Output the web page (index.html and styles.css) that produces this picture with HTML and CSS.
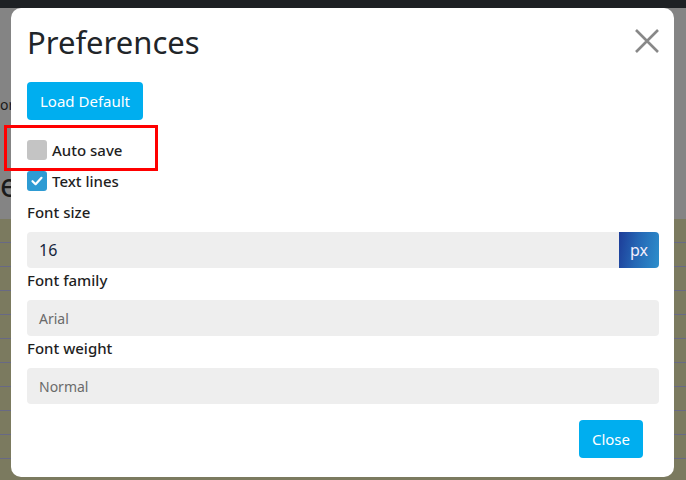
FILE: index.html
```html
<!DOCTYPE html>
<html lang="en">
<head>
<meta charset="utf-8">
<title>Preferences</title>
<link rel="stylesheet" href="styles.css">
</head>
<body>
<div class="page">
  <div class="topbar"></div>
  <div class="upper">
    <div class="bg-or">or</div>
    <div class="bg-e">e</div>
  </div>
  <div class="notepad"></div>
</div>

<div class="modal">
  <div class="modal-header">
    <h1 class="title">Preferences</h1>
    <button class="close-x" aria-label="Close">
      <svg width="24" height="24" viewBox="0 0 24 24"><path d="M1 1 L23 23 M23 1 L1 23" stroke="#888" stroke-width="2.6" fill="none"/></svg>
    </button>
  </div>
  <button class="btn">Load Default</button>
  <div class="checks">
    <label class="check"><span class="box"></span>Auto save</label>
    <label class="check"><span class="box on"><svg width="14" height="14" viewBox="0 0 14 14"><path d="M2.5 7.2 L5.6 10.2 L11.5 3.8" stroke="#fff" stroke-width="2.2" fill="none" stroke-linecap="round" stroke-linejoin="round"/></svg></span>Text lines</label>
  </div>
  <div class="field">
    <div class="label">Font size</div>
    <div class="input-group">
      <div class="input value">16</div>
      <div class="addon">px</div>
    </div>
  </div>
  <div class="field">
    <div class="label">Font family</div>
    <div class="input muted">Arial</div>
  </div>
  <div class="field">
    <div class="label">Font weight</div>
    <div class="input muted">Normal</div>
  </div>
  <div class="footer">
    <button class="btn">Close</button>
  </div>
</div>

<div class="highlight"></div>
</body>
</html>
```

FILE: styles.css
```css
* { box-sizing: border-box; }
html, body { margin: 0; padding: 0; }
body {
  width: 686px;
  height: 480px;
  overflow: hidden;
  position: relative;
  font-family: "Noto Sans", "Open Sans", sans-serif;
  background: #7b7a5f;
}
.page { display: flex; flex-direction: column; height: 480px; }
.topbar { height: 8px; background: #1e2124; }
.upper {
  height: 211px;
  background: #848484;
  padding-top: 82px;
  color: #1a1a1a;
}
.bg-or { font-size: 14px; line-height: 30px; }
.bg-e { font-size: 32px; line-height: 40px; margin-top: 45px; }
.notepad {
  flex: 1;
  background-color: #7b7a5f;
  background-image: repeating-linear-gradient(to bottom, transparent 0 23px, #686985 23px 24px);
}

.modal {
  position: absolute;
  left: 11px;
  top: 8px;
  width: 663px;
  height: 469px;
  background: #fff;
  border-radius: 10px;
  padding: 16px 15px 0 16px;
  color: #212529;
}
.modal-header {
  display: flex;
  justify-content: space-between;
  align-items: center;
  height: 38px;
}
.title {
  margin: 0;
  font-size: 31px;
  font-weight: 400;
  line-height: 38px;
  color: #212529;
  margin-top: -2px;
}
.close-x {
  border: 0;
  background: none;
  padding: 0;
  width: 24px;
  height: 24px;
  margin-top: -4px;
  display: flex;
}
.btn {
  display: inline-flex;
  align-items: center;
  height: 38px;
  padding: 0 13px;
  border: 0;
  border-radius: 4px;
  background: #00aeef;
  color: #fff;
  font-family: inherit;
  font-size: 15px;
}
.modal > .btn { margin-top: 20px; }
.checks {
  margin-top: 20px;
  display: flex;
  flex-direction: column;
  gap: 11px;
}
.check {
  display: flex;
  align-items: center;
  gap: 5px;
  height: 20px;
  font-size: 15px;
  font-weight: 500;
  color: #1f1f1f;
}
.box {
  width: 20px;
  height: 20px;
  border-radius: 3px;
  background: #c4c4c4;
  display: flex;
  align-items: center;
  justify-content: center;
}
.box.on { background: #2e9bd3; }
.checks + .field { margin-top: 9px; }
.label {
  font-size: 15px;
  font-weight: 500;
  line-height: 24px;
  color: #1f1f1f;
}
.input {
  margin-top: 8px;
  height: 36px;
  background: #eeeeee;
  border-radius: 4px;
  padding-left: 12px;
  display: flex;
  align-items: center;
  font-size: 14px;
}
.input.muted { color: #6a6a6a; }
.input-group {
  margin-top: 8px;
  display: flex;
  height: 36px;
}
.input-group .input {
  margin-top: 0;
  flex: 1;
  border-radius: 4px 0 0 4px;
}
.input.value { font-size: 16px; color: #16263d; }
.addon {
  width: 40px;
  border-radius: 0 4px 4px 0;
  background: linear-gradient(100deg, #1d3c98 0%, #2567b5 45%, #2d8fcc 100%);
  color: #f3eefc;
  font-size: 16px;
  display: flex;
  align-items: center;
  justify-content: center;
}
.footer {
  margin-top: 16px;
  display: flex;
  justify-content: flex-end;
  padding-right: 16px;
}
.highlight {
  position: absolute;
  left: 4px;
  top: 125px;
  width: 154px;
  height: 46px;
  border: 3px solid #ff0000;
}
```
